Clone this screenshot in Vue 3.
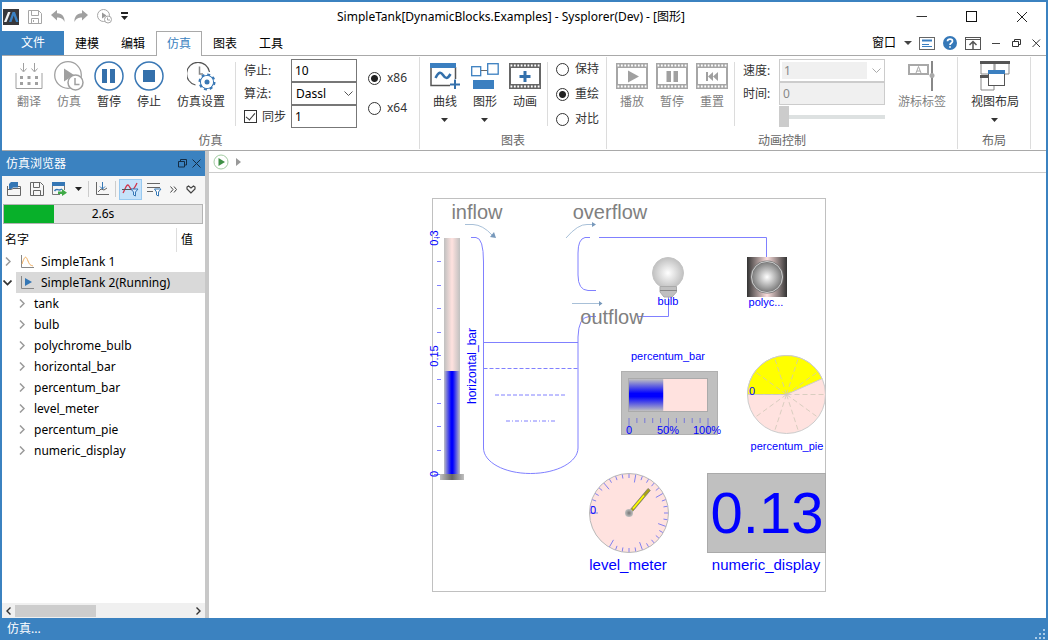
<script setup>
import { ref } from 'vue'

const stopTime = ref('10')
const solver = ref('Dassl')
const sync = ref(true)
const step = ref('1')
const arch = ref('x86')
const plotMode = ref('重绘')
const plotModes = ['保持', '重绘', '对比']
const tabs = ['建模', '编辑', '仿真', '图表', '工具']
const children = ['tank', 'bulb', 'polychrome_bulb', 'horizontal_bar', 'percentum_bar', 'level_meter', 'percentum_pie', 'numeric_display']
const progress = 25

const level = 0.13 / 0.3
const rad = Math.PI / 180

const meterTicks = Array.from({ length: 31 }, (_, i) => {
  const a = (180 + i * 10) * rad
  const inner = i % 5 === 0 ? 31 : 35
  return {
    x1: 629 + Math.cos(a) * inner, y1: 513 + Math.sin(a) * inner,
    x2: 629 + Math.cos(a) * 39, y2: 513 + Math.sin(a) * 39
  }
})
const pieSpokes = Array.from({ length: 10 }, (_, i) => {
  const a = (180 + i * 36) * rad
  return { x: 786.5 + Math.cos(a) * 39, y: 394.5 + Math.sin(a) * 39 }
})
const pieEnd = (180 + level * 360) * rad
const piePath = `M786.5 394.5H747.5A39 39 0 0 1 ${786.5 + Math.cos(pieEnd) * 39} ${394.5 + Math.sin(pieEnd) * 39}Z`
const barTicks = [261, 285, 308, 332, 379, 403, 426, 450]
const percentTicks = Array.from({ length: 11 }, (_, i) => ({ x: 629 + i * 7.9, end: i % 5 === 0 ? 433 : 423 }))
const filmHoles = Array.from({ length: 9 }, (_, i) => 1.5 + i * 3.4)
</script>

<template>
  <div class="window">
    <header class="titlebar">
      <div class="quick">
        <button aria-label="Sysplorer"><svg width="16" height="16"><rect width="16" height="16" fill="#38383c" /><path d="M1 13L5 3H7.500L3.500 13Z" fill="#f4f4f4" /><path d="M6 13L9.500 3H12L15.500 13H13L10.700 6.500L8.500 13Z" fill="#3b82c4" /></svg></button>
        <button aria-label="保存"><svg width="14" height="14" fill="none" stroke="#a6a6a6"><path d="M.5 .5H10.500L13.500 3.500V13.500H.5ZM3.500 .5V5.500H10.500V.5M3.500 13.500V8.500H10.500V13.500M5.500 10V12" /></svg></button>
        <button aria-label="撤销"><svg width="14" height="13"><path d="M0 5L6 0V3.200C11 3 14 7 13.500 12C12 8.500 9.500 7.500 6 7.500V10.500Z" fill="#a0a0a0" /></svg></button>
        <button aria-label="重做"><svg width="14" height="13"><path d="M14 5L8 0V3.200C3 3 0 7 .5 12C2 8.500 4.500 7.500 8 7.500V10.500Z" fill="#a0a0a0" /></svg></button>
        <button aria-label="仿真"><svg width="15" height="15" fill="none" stroke="#a6a6a6"><circle cx="6.500" cy="6.500" r="6" /><path d="M5 3.500V9.500L9.500 6.500Z" fill="#999" stroke="none" /><circle cx="11" cy="10.500" r="3.500" fill="#fff" /><path d="M10.500 8.500V11H13" /></svg></button>
        <button aria-label="自定义"><svg width="7" height="9"><path d="M0 0H7V2H0ZM0 4H7L3.500 8Z" fill="#222" /></svg></button>
      </div>
      <h1>SimpleTank[DynamicBlocks.Examples] - Sysplorer(Dev) - [图形]</h1>
      <div class="winctl">
        <button aria-label="最小化"><svg width="12" height="12" fill="none" stroke="#333"><path d="M.5 5.500H11" /></svg></button>
        <button aria-label="最大化"><svg width="12" height="12" fill="none" stroke="#111"><rect x=".5" y=".5" width="10" height="10" /></svg></button>
        <button aria-label="关闭"><svg width="12" height="12" fill="none" stroke="#222"><path d="M1 1L11 11M11 1L1 11" /></svg></button>
      </div>
    </header>

    <nav class="tabs">
      <button class="file">文件</button>
      <button v-for="t in tabs" :key="t" class="tab" :class="{ active: t === '仿真' }">{{ t }}</button>
      <div class="tabtools">
        <button class="wmenu">窗口<svg width="8" height="4"><path d="M0 0H8L4 4Z" fill="#444" /></svg></button>
        <button aria-label="面板"><svg width="16" height="13" fill="none" stroke="#666"><rect x=".5" y=".5" width="15" height="12" /><path d="M3 3.500H13" stroke="#3b7fc0" stroke-width="2" /><path d="M3 7.500H10M3 9.500H13" stroke="#3b7fc0" /></svg></button>
        <button aria-label="帮助"><svg width="14" height="14"><circle cx="7" cy="7" r="7" fill="#3578b8" /><path d="M4.500 5.200C4.700 2.500 9.500 2.500 9.500 5.200C9.500 7 7 7 7 9M7 10.200V11.800" fill="none" stroke="#fff" stroke-width="1.700" /></svg></button>
        <button aria-label="收起"><svg width="16" height="13" fill="none" stroke="#555"><rect x=".5" y=".5" width="15" height="12" /><path d="M1 2.500H15" /><path d="M8 12V5M4.500 8L8 4.500L11.500 8" stroke-width="1.500" /></svg></button>
        <button aria-label="最小化子窗口"><svg width="9" height="9"><path d="M0 4.500H8" stroke="#444" /></svg></button>
        <button aria-label="还原子窗口"><svg width="9" height="9" fill="none" stroke="#333"><path d="M.5 2.500H6.500V7.500H.5ZM2.500 2V.5H8.500V5.500H7" /></svg></button>
        <button aria-label="关闭子窗口"><svg width="9" height="9"><path d="M.5 .5L8 8M8 .5L.5 8" stroke="#333" /></svg></button>
      </div>
    </nav>

    <div class="ribbon">
      <section class="group">
        <div class="body">
          <div class="tools lead">
            <button class="tool off"><span class="ico"><svg width="28" height="26" fill="none" stroke="#a0a0a0"><path d="M1 10V25.500H27V10" /><path d="M8.500 0V8M5.500 5.500L8.500 9L11.500 5.500M19.500 0V8M16.500 5.500L19.500 9L22.500 5.500" /><path d="M5 14.500H23M5 20.500H23" stroke-width="3" stroke-dasharray="3 4.500" /></svg></span>翻译</button>
            <button class="tool off"><span class="ico"><svg width="30" height="30" fill="none" stroke="#a0a0a0"><circle cx="14" cy="14" r="13.300" stroke-width="1.300" /><path d="M10 7.500V20.500L20 14Z" fill="#a0a0a0" stroke="none" /><circle cx="21.500" cy="21.500" r="7.500" fill="#fff" stroke-width="1.500" /><path d="M21 17V23.500H25.500" stroke-width="1.500" /></svg></span>仿真</button>
            <button class="tool"><span class="ico"><svg width="30" height="30"><circle cx="15" cy="15" r="14" fill="none" stroke="#3a78b5" stroke-width="1.500" /><path d="M8 8H13V22H8ZM16 8H21V22H16Z" fill="#3470ab" /></svg></span>暂停</button>
            <button class="tool"><span class="ico"><svg width="30" height="30"><circle cx="15" cy="15" r="14" fill="none" stroke="#3a78b5" stroke-width="1.500" /><rect x="9" y="9" width="12" height="12" fill="#3470ab" /></svg></span>停止</button>
            <button class="tool wide"><span class="ico"><svg width="29" height="29" fill="none"><path d="M22.500 10A11.500 11.500 0 1 0 8.500 23" stroke="#555" stroke-width="1.200" /><path d="M12.500 4.500V12H16" stroke="#888" stroke-width="1.500" /><circle cx="20" cy="20" r="6.500" stroke="#3a78b5" stroke-width="1.200" /><circle cx="20" cy="20" r="7.500" stroke="#3a78b5" stroke-width="2" stroke-dasharray="3 2.890" /><circle cx="20" cy="20" r="5.900" fill="#fff" /><circle cx="20" cy="20" r="2.500" fill="#3a78b5" /></svg></span>仿真设置</button>
          </div>
          <i class="sep"></i>
          <div class="fields">
            <label for="stop">停止:</label><input id="stop" v-model="stopTime" type="text">
            <label for="solver">算法:</label>
            <span class="selwrap"><select id="solver" v-model="solver"><option>Dassl</option></select><svg width="9" height="5"><path d="M.5 .5L4.500 4.500L8.500 .5" fill="none" stroke="#555" /></svg></span>
            <label class="check"><input v-model="sync" type="checkbox"><span>同步</span></label><input v-model="step" type="text" aria-label="步长">
          </div>
          <div class="radios arch">
            <label><input v-model="arch" type="radio" value="x86">x86</label>
            <label><input v-model="arch" type="radio" value="x64">x64</label>
          </div>
        </div>
        <h2>仿真</h2>
      </section>

      <section class="group">
        <div class="body">
          <div class="tools">
            <button class="tool"><span class="ico"><svg width="30" height="27" fill="none"><path d="M1 4V22.500H20M25.500 4V16" stroke="#555" stroke-width="1.500" /><rect width="26" height="5" fill="#3b7fc0" /><path d="M5.500 15C9 8 11 9 13 12S17 17 20.500 11" stroke="#3470ab" stroke-width="2.500" /><path d="M25 16.500V26M20 21.500H30" stroke="#3470ab" stroke-width="2" /></svg></span>曲线<svg class="caret" width="8" height="4"><path d="M0 0H7L3.500 4Z" fill="#333" /></svg></button>
            <button class="tool"><span class="ico"><svg width="28" height="27" fill="none" stroke="#3b7fc0"><rect x=".7" y="3.700" width="9" height="9" stroke-width="1.300" /><rect x="16.700" y=".7" width="10.500" height="10.500" stroke-width="1.300" /><path d="M10 7.500H16" stroke="#666" /><rect x="2" y="17" width="21" height="9" fill="#3b7fc0" stroke="none" /></svg></span>图形<svg class="caret" width="8" height="4"><path d="M0 0H7L3.500 4Z" fill="#333" /></svg></button>
            <button class="tool"><span class="ico"><svg width="32" height="26"><path d="M0 0H32V26H0ZM2 5V21H30V5Z" fill="#666" fill-rule="evenodd" /><rect v-for="h in filmHoles" :key="'t' + h" :x="h" y="1.500" width="1.800" height="2" fill="#fff" /><rect v-for="h in filmHoles" :key="'b' + h" :x="h" y="22.500" width="1.800" height="2" fill="#fff" /><path d="M16 8V19M10.500 13.500H21.500" stroke="#3470ab" stroke-width="3" /></svg></span>动画</button>
          </div>
          <i class="sep"></i>
          <div class="radios mode">
            <label v-for="m in plotModes" :key="m"><input v-model="plotMode" type="radio" :value="m">{{ m }}</label>
          </div>
        </div>
        <h2>图表</h2>
      </section>

      <section class="group">
        <div class="body">
          <div class="tools">
            <button v-for="(t, n) in ['播放', '暂停', '重置']" :key="t" class="tool off"><span class="ico"><svg width="32" height="26"><path d="M0 0H32V26H0ZM2 5V21H30V5Z" fill="#a6a6a6" fill-rule="evenodd" /><rect v-for="h in filmHoles" :key="'t' + h" :x="h" y="1.500" width="1.800" height="2" fill="#fff" /><rect v-for="h in filmHoles" :key="'b' + h" :x="h" y="22.500" width="1.800" height="2" fill="#fff" /><path v-if="n === 0" d="M12 7.500V19.500L23 13.500Z" fill="#a0a0a0" /><path v-else-if="n === 1" d="M10.500 8H15V19H10.500ZM17.500 8H22V19H17.500Z" fill="#a0a0a0" /><path v-else d="M10 9H12V18H10ZM17 9V18L12 13.500ZM22 9V18L17 13.500Z" fill="#a0a0a0" /></svg></span>{{ t }}</button>
          </div>
          <i class="sep"></i>
          <div class="fields anim">
            <label for="speed">速度:</label>
            <span class="selwrap"><select id="speed" disabled><option>1</option></select><svg width="9" height="5"><path d="M.5 .5L4.500 4.500L8.500 .5" fill="none" stroke="#aaa" /></svg></span>
            <label for="time">时间:</label><input id="time" type="text" value="0" disabled>
            <span></span><input type="range" min="0" max="100" value="0" disabled aria-label="时间进度">
          </div>
          <div class="tools cursor">
            <button class="tool off wide"><span class="ico"><svg width="28" height="30" fill="none" stroke="#a8a8a8"><rect x="1" y="4" width="19" height="9" stroke-width="2" /><path d="M8 12L10.500 5.500L13 12M9 10H12" /><path d="M24 0V30" stroke="#888" stroke-width="2" /><circle cx="24" cy="14.500" r="2.500" fill="#aaa" stroke="none" /></svg></span>游标标签</button>
          </div>
        </div>
        <h2>动画控制</h2>
      </section>

      <section class="group layout">
        <div class="body">
          <button class="tool wide"><span class="ico"><svg width="30" height="30" fill="none"><path d="M1 1H14V13H1ZM15 1H29V13H15ZM1 16H14V29H1Z" stroke="#888" /><path d="M0 1.500H30M0 15.500H14" stroke="#555" stroke-width="3" /><rect x="8.500" y="9.500" width="16" height="15" fill="#fff" stroke="#555" /><rect x="8" y="9" width="17" height="4" fill="#3b7fc0" /></svg></span>视图布局<svg class="caret" width="8" height="4"><path d="M0 0H7L3.500 4Z" fill="#333" /></svg></button>
        </div>
        <h2>布局</h2>
      </section>
    </div>

    <main class="main">
      <aside class="browser">
        <div class="phead">
          <h2>仿真浏览器</h2>
          <button aria-label="浮动"><svg width="9" height="9" fill="none" stroke="#142c44"><path d="M.5 2.500H6.500V8H.5ZM2.500 2V.5H8.500V6H7" /></svg></button>
          <button aria-label="关闭面板"><svg width="9" height="9"><path d="M.5 .5L8.500 8.500M8.500 .5L.5 8.500" stroke="#142c44" /></svg></button>
        </div>
        <div class="ptools">
          <button aria-label="打开"><svg width="15" height="14" fill="none" stroke="#666"><path d="M.5 4V13.500H13.500V4.500H11M.5 7.500H4.500L6 6.500H13" /><path d="M4 0H11V5.500H6L4.500 7H2V2Z" fill="#3577b5" stroke="none" /></svg></button>
          <button aria-label="保存结果"><svg width="14" height="14" fill="none" stroke="#666"><path d="M.5 .5H10.500L13.500 3.500V13.500H.5ZM3.500 .5V5.500H9.500V.5M3.500 13.500V8.500H10.500V13.500" /></svg></button>
          <button aria-label="导出"><svg width="15" height="14" fill="none"><path d="M.5 3V12.500H8M12.500 4V8" stroke="#777" /><rect width="13" height="4" fill="#3577b5" /><path d="M2.500 9C5 5 6 10 10 7" stroke="#3577b5" stroke-width="1.500" /><path d="M6 9.500H10V7L15 10.800L10 14V12H6Z" fill="#3faa46" /></svg></button>
          <button aria-label="更多"><svg width="7" height="4"><path d="M0 0H7L3.500 4Z" fill="#222" /></svg></button>
          <i></i>
          <button aria-label="坐标"><svg width="14" height="14" fill="none" stroke="#666"><path d="M1.500 0V12.500H14M3 10L6 7L9 8L12 6" /><path d="M7.500 0V7M5 4.500L7.500 7L10 4.500" stroke="#3577b5" /></svg></button>
          <i></i>
          <button class="on" aria-label="筛选曲线"><svg width="17" height="15" fill="none"><path d="M1 11C4 5 5 1 7 4S10 12 15 1" stroke="#d1344b" stroke-width="1.300" /><path d="M0 7.500H12" stroke="#555" /><path d="M9 7H16L13.500 10V14L11.500 13V10Z" fill="#d6eaff" stroke="#3577b5" /></svg></button>
          <button aria-label="筛选列表"><svg width="15" height="15" fill="none" stroke="#666"><path d="M0 1.500H13M0 5.500H13M0 9.500H6" /><path d="M7.500 7H14L11.500 10V14L9.500 13V10Z" fill="#fff" stroke="#3577b5" /></svg></button>
          <button aria-label="展开"><svg width="8" height="7" fill="none" stroke="#444"><path d="M.5 .5L3 3.500L.5 6.500M4 .5L6.500 3.500L4 6.500" /></svg></button>
          <button aria-label="收藏"><svg width="10" height="9" fill="none" stroke="#444" stroke-width="1.200"><path d="M5 8L1 4V2L2.500 1L5 3L7.500 1L9 2V4Z" /></svg></button>
        </div>
        <div class="progress"><div class="fill" :style="{ width: progress + '%' }"></div><span>2.6s</span></div>
        <div class="cols"><span>名字</span><span>值</span></div>
        <ul class="tree">
          <li class="row"><svg class="chev" width="6" height="9"><path d="M1 .5L5 4.500L1 8.500" fill="none" stroke="#999" stroke-width="1.500" /></svg><span class="item"><svg width="15" height="14" fill="none"><path d="M1.500 0V12.500H14" stroke="#888" /><path d="M2 9C5 0 6 1 8 6S11 10 13 11" stroke="#efaa57" /></svg>SimpleTank 1</span></li>
          <li class="row"><svg class="chev down" width="9" height="6"><path d="M.5 .5L4.500 4.500L8.500 .5" fill="none" stroke="#333" stroke-width="1.700" /></svg><span class="item sel"><svg width="15" height="14" fill="none"><path d="M1.500 0V12.500H14" stroke="#888" /><path d="M5 2V10L12 6Z" fill="#3577b5" /></svg>SimpleTank 2(Running)</span></li>
          <li v-for="c in children" :key="c" class="row kid"><svg class="chev" width="6" height="9"><path d="M1 .5L5 4.500L1 8.500" fill="none" stroke="#999" stroke-width="1.500" /></svg>{{ c }}</li>
        </ul>
        <div class="hscroll">
          <button aria-label="向左"><svg width="5" height="8"><path d="M4.500 .5L1 4L4.500 7.500" fill="none" stroke="#333" stroke-width="1.400" /></svg></button>
          <div class="lane"><div class="thumb"></div></div>
          <button aria-label="向右"><svg width="5" height="8"><path d="M.5 .5L4 4L.5 7.500" fill="none" stroke="#333" stroke-width="1.400" /></svg></button>
        </div>
      </aside>

      <section class="view">
        <div class="crumbs">
          <button aria-label="运行"><svg width="16" height="16"><circle cx="8" cy="8" r="7" fill="#fff" stroke="#a3cca3" /><path d="M5.500 4V12L12 8Z" fill="#3f8f46" /></svg></button>
          <svg width="5" height="8"><path d="M0 0V8L5 4Z" fill="#999" /></svg>
        </div>
        <div class="canvas">
          <svg width="402" height="402" viewBox="428 194 402 402" role="img" aria-label="SimpleTank">
            <defs>
              <linearGradient id="gTube"><stop offset="0" stop-color="#c0c0c0" /><stop offset=".5" stop-color="#ffe2df" /><stop offset="1" stop-color="#c0c0c0" /></linearGradient>
              <linearGradient id="gLevel"><stop offset="0" stop-color="#c0c0c0" /><stop offset=".45" stop-color="#00f" /><stop offset=".55" stop-color="#00f" /><stop offset="1" stop-color="#c0c0c0" /></linearGradient>
              <linearGradient id="gFoot"><stop offset="0" stop-color="#c0c0c0" /><stop offset=".5" stop-color="#666" /><stop offset="1" stop-color="#c0c0c0" /></linearGradient>
              <linearGradient id="gPercent" x2="0" y2="1"><stop offset="0" stop-color="#c0c0c0" /><stop offset=".45" stop-color="#00f" /><stop offset=".55" stop-color="#00f" /><stop offset="1" stop-color="#c0c0c0" /></linearGradient>
              <linearGradient id="gBox"><stop offset="0" stop-color="#333" /><stop offset=".5" stop-color="#fde0de" /><stop offset="1" stop-color="#333" /></linearGradient>
              <radialGradient id="gBulb"><stop offset="0" stop-color="#fff" /><stop offset="1" stop-color="#c0c0c0" /></radialGradient>
              <radialGradient id="gLens"><stop offset="0" stop-color="#fff" /><stop offset="1" stop-color="#777" /></radialGradient>
              <radialGradient id="gHub"><stop offset="0" stop-color="#777" /><stop offset="1" stop-color="#c0c0c0" /></radialGradient>
            </defs>
            <rect x="432.500" y="198.500" width="393" height="393" fill="#fff" stroke="#c0c0c0" />

            <g fill="none" stroke="#8080ff">
              <path d="M471 237.500H476Q483.500 238 483.500 262V448C483.500 462 504 473.500 530.500 473.500S578 462 578 448V337Q578.500 317 589 316.500H596" />
              <path d="M590 237.500H585Q578 239 578 253V275Q578 290 588 290.500H596" />
              <path d="M599 237.500H766.500V257M638 316.500H668.500V297" />
              <path d="M483.500 342.500H578" />
              <path d="M483.500 368.500H578" stroke-dasharray="4 2" />
              <path d="M495 395H566" stroke-dasharray="4 2" />
              <path d="M506 421H556" stroke-dasharray="4 2 1 2" />
              <path v-for="y in barTicks" :key="y" :d="`M437 ${y + .5}H441`" />
              <path d="M437 355.500H441M434 237.500H440M434 474.500H440" />
            </g>

            <g fill="none" stroke="#a8c0d8">
              <path d="M465 224.500H473Q483 225 492 235" />
              <path d="M566 238Q578 224 587 224.500H593" />
              <path d="M572 303.500H600" />
            </g>
            <path d="M496 238L490 237L494 232ZM596 224.500L592 222V227ZM602.500 303.500L599 301V306Z" fill="#7899bb" />

            <rect x="444" y="238" width="16" height="134" fill="url(#gTube)" />
            <rect x="444" y="371" width="16" height="103" fill="url(#gLevel)" />
            <rect x="440" y="474" width="24" height="6" fill="url(#gFoot)" />

            <circle cx="668" cy="273" r="15.500" fill="url(#gBulb)" stroke="#c4c4c4" />
            <path d="M660 286.500H676.500V292L672 297H664L660 292Z" fill="#c0c0c0" stroke="#aaa" />
            <path d="M660 290.500H677" stroke="#888" />

            <rect x="747" y="257" width="40" height="40" fill="url(#gBox)" />
            <circle cx="767" cy="277" r="15.500" fill="url(#gLens)" stroke="#777" stroke-width="2" />
            <circle cx="767" cy="277" r="15.500" fill="none" stroke="#ccc" />

            <rect x="621.500" y="371.500" width="96" height="63" fill="#c0c0c0" stroke="#b0b0b0" />
            <rect x="628.500" y="378.500" width="79" height="33" fill="#ffe2df" stroke="#aaa" />
            <rect x="629" y="379" :width="79 * level" height="32" fill="url(#gPercent)" />
            <path v-for="t in percentTicks" :key="t.x" :d="`M${t.x} 418V${t.end}`" stroke="#7777d8" />

            <circle cx="786.500" cy="394.500" r="39" fill="#ffe2df" stroke="#ccc" />
            <path :d="piePath" fill="#ff0" stroke="#ccc" />
            <path v-for="s in pieSpokes" :key="s.x + s.y" :d="`M786.500 394.500L${s.x} ${s.y}`" stroke="#d0c8b8" stroke-opacity=".8" stroke-dasharray="5 3" />

            <circle cx="629" cy="513" r="39.500" fill="#ffe2df" stroke="#b8b8b8" />
            <line v-for="(t, i) in meterTicks" :key="i" v-bind="t" stroke="#8080f0" />
            <g transform="rotate(40 629 513)"><rect x="627.800" y="482" width="3" height="29" fill="#aaa316" stroke="#777" stroke-width=".7" /><rect x="628.500" y="490" width="1.500" height="17" fill="#ff0" /></g>
            <circle cx="629" cy="513" r="4" fill="url(#gHub)" />

            <rect x="707.500" y="473.500" width="118" height="79" fill="#c0c0c0" stroke="#aaa" />

            <g class="flow" text-anchor="middle">
              <text x="477" y="219">inflow</text>
              <text x="610" y="219">overflow</text>
              <text x="612" y="324">outflow</text>
            </g>
            <g class="small" text-anchor="middle">
              <text x="668" y="305">bulb</text>
              <text x="766" y="306">polyc...</text>
              <text x="668" y="360">percentum_bar</text>
              <text x="787" y="450">percentum_pie</text>
              <text x="752" y="395">0</text>
              <text x="629" y="434">0</text>
              <text x="668" y="434">50%</text>
              <text x="707" y="434">100%</text>
              <text x="593" y="514">0</text>
              <text transform="translate(438 238) rotate(-90)">0.3</text>
              <text transform="translate(438 356) rotate(-90)">0.15</text>
              <text transform="translate(438 474) rotate(-90)">0</text>
              <text class="mid" transform="translate(476 366) rotate(-90)">horizontal_bar</text>
              <text class="name" x="628" y="570">level_meter</text>
              <text class="name" x="766" y="570">numeric_display</text>
              <text class="digits" x="767" y="533">0.13</text>
            </g>
          </svg>
        </div>
      </section>
    </main>

    <footer class="status"><span>仿真...</span><svg width="11" height="11" fill="#a9cbe8"><path d="M8 0H10V2H8ZM8 4H10V6H8ZM4 4H6V6H4ZM8 8H10V10H8ZM4 8H6V10H4ZM0 8H2V10H0Z" /></svg></footer>
  </div>
</template>

<style>
body { margin: 0; }
</style>

<style scoped>
* { box-sizing: border-box; }
.window { display: flex; flex-direction: column; min-height: 100vh; border: 2px solid #3b82c0; border-bottom: 0; background: #fff; color: #222; font: 12px/16px "Noto Sans", "Noto Sans CJK SC", sans-serif; }
button { display: flex; align-items: center; justify-content: center; padding: 0; border: 0; background: none; color: inherit; font: inherit; white-space: nowrap; }
h1, h2 { margin: 0; font: inherit; }
svg { display: block; flex: none; }

.titlebar { display: flex; align-items: center; height: 29px; color: #000; }
.quick { display: flex; align-items: center; gap: 9px; padding-left: 1px; }
.titlebar h1 { flex: 1; padding-right: 22px; text-align: center; white-space: nowrap; }
.winctl { display: flex; gap: 38px; padding-right: 18px; }

.tabs { display: flex; height: 25px; border-bottom: 1px solid #a9a9a9; color: #000; }
.file { width: 62px; background: #3b82c0; color: #fff; }
.tab { width: 46px; height: 25px; border: 1px solid transparent; border-bottom: 0; }
.tab.active { border-color: #a9a9a9; background: #fff; color: #3b82c0; }
.tabtools { display: flex; align-items: center; gap: 8px; margin-left: auto; padding-right: 5px; }
.wmenu { gap: 8px; margin-right: -1px; }
.tabtools button:nth-last-child(-n+3) { margin-left: 3px; }

.ribbon { display: flex; height: 95px; border-bottom: 1px solid #a9a9a9; }
.group { display: flex; flex-direction: column; justify-content: space-between; padding: 2px 0 0; border-right: 1px solid #dcdcdc; margin: 1px 0; }
.group h2 { text-align: center; color: #666; }
.body { display: flex; height: 70px; }
.tools { display: flex; padding-left: 5px; }
.tools.lead { padding-left: 7px; }
.tool { flex-direction: column; justify-content: flex-start; width: 40px; color: #333; line-height: 18px; }
.tool.wide { width: 64px; }
.tool.off { color: #808080; }
.ico { display: flex; align-items: center; justify-content: center; height: 34px; }
.caret { margin-top: 7px; }
.sep { width: 1px; height: 64px; margin: 3px 0 0 2px; background: #dcdcdc; }
.fields { display: grid; grid-template-columns: 47px 66px; grid-template-rows: repeat(3, 23px); align-items: center; margin-left: 8px; color: #333; }
.fields.anim { grid-template-columns: 36px 106px; }
input[type="text"], select { width: 100%; height: 23px; margin: 0; padding: 0 3px; border: 1px solid #777; border-radius: 0; background: #fff; color: #000; font: inherit; appearance: none; }
input:disabled, select:disabled { border-color: #ccc; background: #f0f0f0; color: #888; opacity: 1; }
.selwrap { position: relative; }
.selwrap svg { position: absolute; right: 4px; top: 9px; pointer-events: none; }
.anim select:disabled { box-shadow: inset -17px 0 #fff, inset 0 0 0 2px #fff; }
.selwrap select { display: block; padding-left: 4px; }
.check { display: flex; align-items: center; gap: 5px; }
.check input { appearance: none; width: 13px; height: 13px; margin: 0; border: 1px solid #333; background: #fff; position: relative; }
.check input:checked::after { content: ""; position: absolute; left: 3px; top: 0; width: 4px; height: 8px; border: solid #333; border-width: 0 1px 1px 0; transform: rotate(40deg); }
.radios { display: flex; flex-direction: column; }
.radios label { display: flex; align-items: center; gap: 6px; color: #333; }
.radios input { appearance: none; width: 13px; height: 13px; margin: 0; border: 1px solid #333; border-radius: 50%; background: #fff; }
.radios input:checked { background: radial-gradient(circle, #222 3px, #fff 4px); }
.arch { gap: 14px; padding: 11px 12px 0 11px; }
.mode { gap: 9px; padding: 2px 7px 0 8px; }
input[type="range"] { appearance: none; width: 100%; height: 21px; margin: 0; background: linear-gradient(#dde1e1, #dde1e1) center / 100% 4px no-repeat; }
input[type="range"]::-webkit-slider-thumb { appearance: none; width: 10px; height: 21px; background: #ccc; }
.cursor { padding: 0 3px 0 5px; }
.layout .body { padding: 0 3px 0 5px; }

.main { display: flex; flex: 1; }
.browser { display: flex; flex-direction: column; width: 207px; border-right: 4px solid #c8c8c8; background: #fff; color: #000; }
.phead { display: flex; align-items: center; gap: 5px; height: 25px; padding: 0 4px; background: #3b82c0; }
.phead h2 { flex: 1; color: #fff; }
.ptools { display: flex; align-items: center; gap: 8px; height: 28px; padding: 0 0 2px 5px; background: #f6f6f6; }
.ptools i { width: 1px; height: 16px; margin: 0 -2px; background: #ccc; }
.ptools .on { width: 23px; height: 21px; margin: 0 -3px; border: 1px solid #98c9f0; background: #c5e2fa; }
.progress { position: relative; height: 20px; margin: 0 2px 0 1px; border: 1px solid #b4b4b4; background: #e4e4e4; text-align: center; }
.fill { height: 100%; background: #08b02a; }
.progress span { position: absolute; inset: 1px 0; }
.cols { display: flex; align-items: center; height: 27px; padding: 4px 0 0 3px; }
.cols span:first-child { width: 171px; }
.cols span:last-child { border-left: 1px solid #ddd; padding: 4px; }
.tree { flex: 1; margin: 0; padding: 0; list-style: none; }
.row { display: grid; grid-template-columns: 14px 1fr; align-items: center; height: 21px; }
.chev { margin-left: 3px; }
.chev.down { margin-left: 1px; }
.item { display: flex; align-items: center; gap: 6px; height: 21px; padding-left: 4px; }
.sel { background: #d9d9d9; }
.kid { padding-left: 14px; grid-template-columns: 18px 1fr; }
.hscroll { display: flex; height: 15px; background: #f0f0f0; }
.hscroll button { width: 13px; }
.lane { flex: 1; }
.thumb { width: 46%; height: 12px; margin-top: 2px; background: #cdcdcd; }

.view { display: flex; flex: 1; flex-direction: column; }
.crumbs { display: flex; align-items: center; gap: 7px; height: 22px; padding-left: 4px; border-bottom: 1px solid #ccc; }
.canvas { display: flex; flex: 1; align-items: center; justify-content: center; padding: 0 0 1px 3px; }
.canvas text { font-family: "Liberation Sans", Arial, sans-serif; }
.flow { fill: #808080; font-size: 20px; }
.small { fill: #00f; font-size: 11px; }
.mid { font-size: 12px; }
.name { font-size: 15px; }
.digits { font-size: 58px; }

.status { display: flex; align-items: center; justify-content: space-between; height: 22px; padding-left: 5px; background: #3b82c0; color: #fff; }
.status svg { align-self: flex-end; }
</style>
